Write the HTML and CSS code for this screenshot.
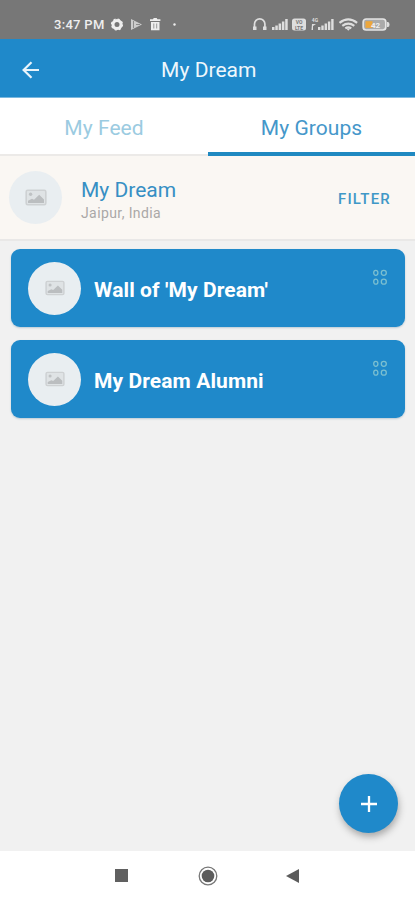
FILE: index.html
```html
<!DOCTYPE html>
<html lang="en">
<head>
<meta charset="utf-8">
<title>My Dream</title>
<link rel="stylesheet" href="styles.css">
</head>
<body>
<svg class="defs" width="0" height="0">
  <symbol id="photo" viewBox="0 0 22 17">
    <rect x="1.200" y="1.200" width="19.600" height="14.600" rx="1.500" fill="#dfe3e5" stroke="#ced1d3" stroke-width="1.600"/>
    <circle cx="5.600" cy="5.200" r="1.700" fill="#bfc2c4"/>
    <path d="M3 14v-2.200l4-2 2 1 5.200-5L19 10.500V14z" fill="#bbbec0"/>
  </symbol>
  <symbol id="dots" viewBox="0 0 16 18">
    <g fill="none" stroke="#7bbfd0" stroke-width="1.300">
      <ellipse cx="3.800" cy="4.800" rx="2.100" ry="2.500"/><circle cx="11.800" cy="4.800" r="2.500"/>
      <ellipse cx="3.800" cy="13.700" rx="2.100" ry="2.500"/><circle cx="11.800" cy="13.700" r="2.500"/>
    </g>
  </symbol>
</svg>
<div class="screen">
  <div class="status">
    <span class="time">3:47 PM</span>
    <svg class="notices" width="70" height="16" viewBox="0 0 70 16" fill="#eee">
      <circle cx="7" cy="8.500" r="4" fill="none" stroke="#eee" stroke-width="3"/>
      <circle cx="7" cy="8.500" r="5.500" fill="none" stroke="#eee" stroke-width="1.200" stroke-dasharray="2.160"/>
      <path d="M21 3l11 5.500-11 5.500z" fill="#ccc"/><path d="M23.500 5v7M26 8.500h4" stroke="#8c8c8c" fill="none"/>
      <path d="M40 3.200h3l.7-1.200h3l.7 1.200h3v1.900H40zM41 6h8.500v8.200H41z"/>
      <path d="M43.800 7.500v5M46.700 7.500v5" stroke="#999" fill="none"/>
      <circle cx="64.500" cy="8.500" r="1.200"/>
    </svg>
    <svg class="signals" width="140" height="20" viewBox="0 0 140 20" fill="#dedede">
      <path d="M4.500 15V10a5.200 5.200 0 0 1 10.400 0v5" fill="none" stroke="#dedede" stroke-width="1.700"/>
      <path d="M3 12.500h3.500V16H3zM13 12.500h3.500V16H13z"/>
      <path d="M22 13h2.500v3H22zM25.300 11.500h2.500V16h-2.500zM28.600 9.500h2.500V16h-2.500zM31.900 7.500h2.500V16h-2.500zM35.200 5h2.500v11h-2.500z"/>
      <rect x="42" y="4.500" width="14" height="12" rx="2.500"/>
      <text x="49" y="10" class="mini dark">VO</text><text x="49" y="15.500" class="mini dark">LTE</text>
      <text x="65" y="7.500" class="mini">4G</text>
      <path d="M62 10h4l-3 2v4h-1.500zM68 13h2.400v3H68zM71.300 11.500h2.400V16h-2.400zM74.600 9.500H77V16h-2.400zM77.900 7.500h2.400V16h-2.400zM81.200 5h2.400v11h-2.400z"/>
      <g fill="none" stroke="#dedede" stroke-width="2.200"><path d="M89.500 8.800q8.800-7 17.600 0"/><path d="M92.300 11.800q6-4.500 12 0"/><path d="M95.300 14.300q3-2 6 0"/></g>
      <path d="M98.300 16.800l-2-2.200h4z"/>
      <rect x="113.200" y="5" width="22.600" height="11" rx="3" fill="#aaa" stroke="#e5e5e5" stroke-width="1.700"/>
      <path d="M137 8h1q1.500 0 1.500 2.500T138 13h-1z"/><rect x="115.500" y="7.200" width="7" height="6.700" fill="#eda73c"/>
      <text x="125.500" y="13.500" class="charge">42</text>
    </svg>
  </div>
  <header class="bar">
    <svg class="back" width="18" height="18" viewBox="0 0 18 18" fill="none" stroke="#e9f4fb" stroke-width="2.200"><path d="M17 9H2M9.500 1.200L1.600 9l7.900 7.800"/></svg>
    <h1>My Dream</h1>
  </header>
  <nav class="tabs"><a class="tab feed"><span>My Feed</span></a><a class="tab active"><span>My Groups</span></a></nav>
  <section class="profile">
    <div class="avatar"><svg width="22" height="17"><use href="#photo"/></svg></div>
    <div class="who"><div class="name">My Dream</div><div class="place">Jaipur, India</div></div>
    <div class="filter">FILTER</div>
  </section>
  <main class="groups">
    <article class="card"><div class="avatar"><svg width="20" height="16"><use href="#photo"/></svg></div><h2>Wall of 'My Dream'</h2><svg class="dots" width="16" height="18"><use href="#dots"/></svg></article>
    <article class="card"><div class="avatar"><svg width="20" height="16"><use href="#photo"/></svg></div><h2>My Dream Alumni</h2><svg class="dots" width="16" height="18"><use href="#dots"/></svg></article>
    <button class="add" aria-label="Add"><svg width="16" height="16" viewBox="0 0 16 16"><path d="M8 0v16M0 8h16" stroke="#fff" stroke-width="2.300"/></svg></button>
  </main>
  <footer class="system">
    <svg width="13" height="13"><rect width="13" height="13" fill="#606060"/></svg>
    <svg width="20" height="20"><circle cx="10" cy="10" r="8.800" fill="none" stroke="#777" stroke-width="1.300"/><circle cx="10" cy="10" r="6.300" fill="#5c5c5c"/></svg>
    <svg width="13" height="14"><path d="M13 0v14L0 7z" fill="#5c5c5c"/></svg>
  </footer>
</div>
</body>
</html>
```
FILE: styles.css
```css
* { box-sizing: border-box; }
body { margin: 0; font-family: Roboto, "Liberation Sans", sans-serif; }
.defs { position: absolute; }
.screen { width: 415px; height: 900px; display: flex; flex-direction: column; background: #f1f1f1; overflow: hidden; }
.status { height: 39px; flex: none; background: #777; display: flex; align-items: flex-start; padding: 16px 0 0 54px; color: #eee; }
.time { width: 56px; font-size: 13px; line-height: 17px; font-weight: 500; letter-spacing: .3px; white-space: nowrap; }
.signals { margin: -2px 0 0 70px; }
.mini { font-size: 5px; font-weight: 700; text-anchor: middle; }
.dark { fill: #777; }
.charge { font-size: 8px; font-weight: 700; text-anchor: middle; fill: #eee; }
.bar { height: 59px; flex: none; display: flex; align-items: center; background: #1f89ca; border-bottom: 1px solid #7ab8df; padding: 3px 0 0 22px; }
.bar h1 { margin: 0 0 0 121px; font-size: 21px; line-height: 26px; font-weight: 400; letter-spacing: .05px; color: #eef7fc; white-space: nowrap; }
.tabs { height: 58px; flex: none; display: grid; grid-template-columns: 208px 1fr; background: #fff; }
.tab { display: flex; align-items: center; justify-content: center; padding-top: 4px; font-size: 21px; letter-spacing: .05px; color: #4597ca; border-bottom: 2px solid #eceae8; }
.feed { color: #9bcbe1; }
.active { padding-top: 6px; border-bottom: 4px solid #1f89c1; }
.profile { height: 85px; flex: none; display: flex; align-items: center; padding: 0 24px 0 9px; background: #faf7f3; border-bottom: 2px solid #e9e8e7; }
.avatar { width: 53px; height: 53px; flex: none; display: flex; align-items: center; justify-content: center; border-radius: 50%; background: #e9eef1; }
.who { margin-left: 19px; padding-top: 3px; flex: 1; }
.name { font-size: 21px; line-height: 26px; color: #368fc4; }
.place { font-size: 14px; line-height: 18px; margin-top: 1px; letter-spacing: .4px; color: #aaa8a7; }
.filter { padding-top: 2px; font-size: 15px; font-weight: 500; letter-spacing: 1.2px; color: #3f98c7; }
.groups { flex: 1; position: relative; display: flex; flex-direction: column; gap: 13px; padding: 8px 10px 0 11px; background: #f1f1f1; }
.card { height: 78px; flex: none; display: flex; align-items: center; padding: 0 17px; border-radius: 9px; background: #1f89ca; box-shadow: 0 1px 2px #b9cad5; }
.card h2 { margin: 3px 0 0 13px; flex: 1; font-size: 21px; line-height: 26px; letter-spacing: .1px; color: #fff; white-space: nowrap; }
.dots { align-self: flex-start; margin-top: 19px; }
.add { position: absolute; right: 17px; bottom: 18px; width: 59px; height: 59px; padding: 0; border: 0; border-radius: 50%; background: #1f89ca; display: flex; align-items: center; justify-content: center; box-shadow: 1px 4px 7px #aaa; }
.system { height: 49px; flex: none; display: flex; align-items: center; background: #fff; padding-left: 115px; }
.system svg:nth-child(2) { margin: 0 68px 0 70px; }
```
